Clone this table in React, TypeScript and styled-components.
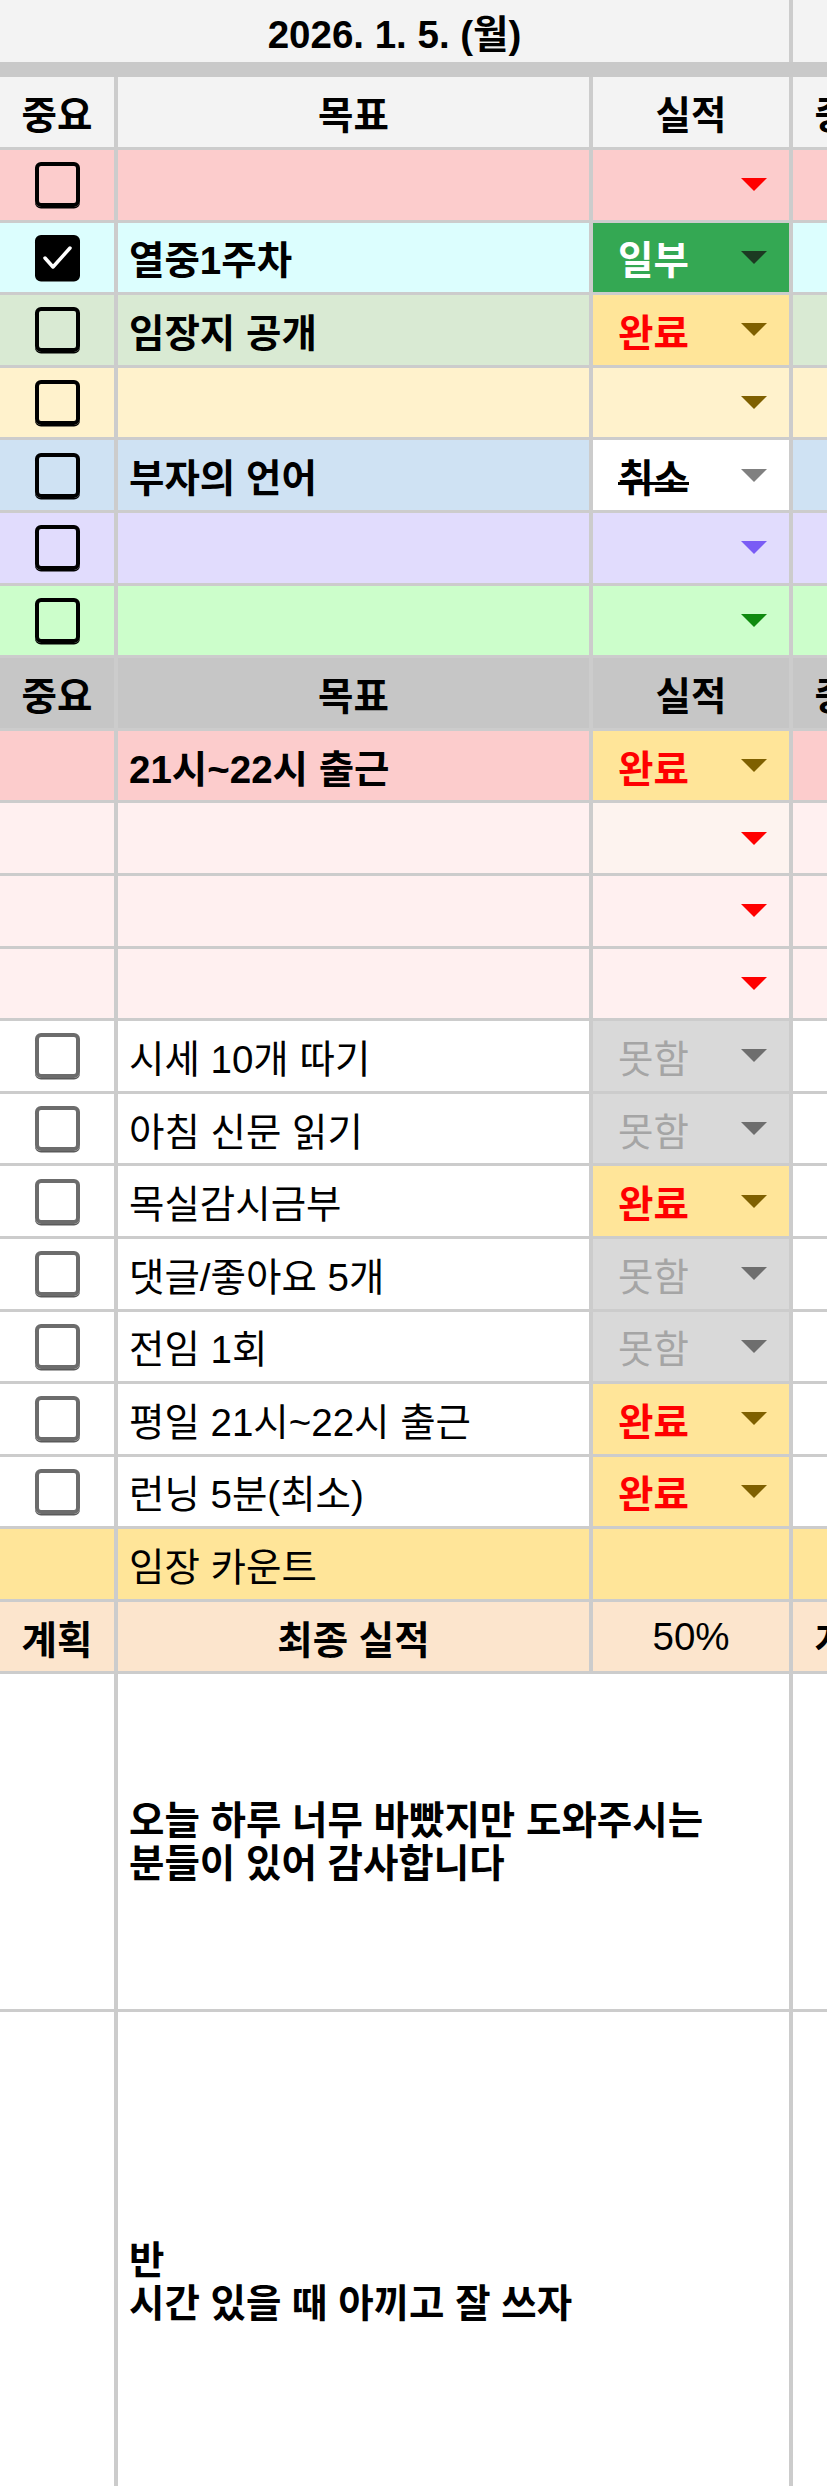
import styled, { createGlobalStyle } from "styled-components";

const GlobalStyle = createGlobalStyle`
  body {
    margin: 0;
    background: #ffffff;
  }
`;

const LINE = "#cccccc";
const COLS = "114px 471px 196px 114px";

const Viewport = styled.div`
  width: 827px;
  height: 2486px;
  overflow: hidden;
  font-family: "Liberation Sans", "Noto Sans CJK KR", sans-serif;
  font-size: 38.5px;
  color: #000;
`;

const Sheet = styled.div`
  width: 907px;
  display: flex;
  flex-direction: column;
  gap: 3px;
  background: ${LINE};
`;

const TopBlock = styled.div`
  display: flex;
  flex-direction: column;
`;

const Band = styled.div`
  height: 15px;
  background: #c9c9c9;
`;

const Row = styled.div<{ $h?: number }>`
  display: grid;
  grid-template-columns: ${COLS};
  column-gap: 4px;
  height: ${({ $h }) => $h ?? 69.6}px;
`;

const Cell = styled.div<{ $bg: string; $center?: boolean; $bold?: boolean; $span?: number }>`
  display: flex;
  align-items: center;
  justify-content: ${({ $center }) => ($center ? "center" : "flex-start")};
  padding: 0 ${({ $center }) => ($center ? "0" : "11px")};
  background: ${({ $bg }) => $bg};
  font-weight: ${({ $bold }) => ($bold ? 700 : 400)};
  white-space: nowrap;
  overflow: hidden;
  ${({ $span }) => ($span ? `grid-column: span ${$span};` : "")}
`;

const Note = styled(Cell)`
  white-space: pre-line;
  line-height: 43px;
`;

const Box = styled.div<{ $tone: "black" | "gray"; $checked?: boolean }>`
  box-sizing: border-box;
  width: 45px;
  height: 45px;
  border-radius: 6px;
  border: 4px solid ${({ $tone }) => ($tone === "black" ? "#000" : "#6c6c6c")};
  box-shadow: 0 1.5px 0 ${({ $tone }) => ($tone === "black" ? "#000" : "#5a5a5a")};
  background: ${({ $checked }) => ($checked ? "#000" : "#fff0")};
  display: flex;
  align-items: center;
  justify-content: center;
`;

const Status = styled.div<{ $bg: string; $color: string; $bold?: boolean }>`
  display: flex;
  align-items: center;
  padding: 0 22px 0 25px;
  background: ${({ $bg }) => $bg};
  color: ${({ $color }) => $color};
  font-weight: ${({ $bold }) => ($bold ? 700 : 400)};
  white-space: nowrap;
`;

const Label = styled.span<{ $strike?: boolean }>`
  position: relative;
  ${({ $strike }) =>
    $strike
      ? `&::after {
          content: "";
          position: absolute;
          left: 0;
          right: 0;
          top: 62%;
          height: 3px;
          background: currentColor;
        }`
      : ""}
`;

const Arrow = styled.span<{ $color: string }>`
  margin-left: auto;
  width: 0;
  height: 0;
  border-left: 13px solid transparent;
  border-right: 13px solid transparent;
  border-top: 13px solid ${({ $color }) => $color};
`;

type Mark = "none" | "black" | "checked" | "gray";

type StatusKind = "일부" | "완료" | "취소" | "못함" | "";

type Item = {
  bg: string;
  mark: Mark;
  goal: string;
  bold?: boolean;
  status: StatusKind;
  arrow?: string;
  statusBg?: string;
};

const CHIPS: Record<Exclude<StatusKind, "">, { bg: string; color: string; arrow: string; bold: boolean; strike?: boolean }> = {
  일부: { bg: "#34a853", color: "#ffffff", arrow: "#1c3a22", bold: true },
  완료: { bg: "#ffe599", color: "#ff0000", arrow: "#7f6000", bold: true },
  취소: { bg: "#ffffff", color: "#000000", arrow: "#808080", bold: true, strike: true },
  못함: { bg: "#d9d9d9", color: "#a5a5a5", arrow: "#6e6e6e", bold: false },
};

const topItems: Item[] = [
  { bg: "#fccccc", mark: "black", goal: "", status: "", arrow: "#ff0000" },
  { bg: "#dcfefe", mark: "checked", goal: "열중1주차", bold: true, status: "일부" },
  { bg: "#d9ead3", mark: "black", goal: "임장지 공개", bold: true, status: "완료" },
  { bg: "#fff2cc", mark: "black", goal: "", status: "", arrow: "#7f6000" },
  { bg: "#cfe2f3", mark: "black", goal: "부자의 언어", bold: true, status: "취소" },
  { bg: "#e1dcfd", mark: "black", goal: "", status: "", arrow: "#7a5cf5" },
  { bg: "#ccfecb", mark: "black", goal: "", status: "", arrow: "#0f8a0f" },
];

const bottomItems: Item[] = [
  { bg: "#fccccc", mark: "none", goal: "21시~22시 출근", bold: true, status: "완료" },
  { bg: "#fff0f0", mark: "none", goal: "", status: "", arrow: "#ff0000", statusBg: "#fdf3ef" },
  { bg: "#fff0f0", mark: "none", goal: "", status: "", arrow: "#ff0000" },
  { bg: "#fff0f0", mark: "none", goal: "", status: "", arrow: "#ff0000" },
  { bg: "#ffffff", mark: "gray", goal: "시세 10개 따기", status: "못함" },
  { bg: "#ffffff", mark: "gray", goal: "아침 신문 읽기", status: "못함" },
  { bg: "#ffffff", mark: "gray", goal: "목실감시금부", status: "완료" },
  { bg: "#ffffff", mark: "gray", goal: "댓글/좋아요 5개", status: "못함" },
  { bg: "#ffffff", mark: "gray", goal: "전임 1회", status: "못함" },
  { bg: "#ffffff", mark: "gray", goal: "평일 21시~22시 출근", status: "완료" },
  { bg: "#ffffff", mark: "gray", goal: "런닝 5분(최소)", status: "완료" },
];

function CheckMark({ mark }: { mark: Mark }) {
  if (mark === "none") return null;
  if (mark === "checked") {
    return (
      <Box $tone="black" $checked>
        <svg width="33" height="33" viewBox="0 0 33 33">
          <polyline points="4,17 12,26 29,7" fill="none" stroke="#fff" strokeWidth="3.5" strokeLinecap="round" strokeLinejoin="round" />
        </svg>
      </Box>
    );
  }
  return <Box $tone={mark === "gray" ? "gray" : "black"} />;
}

function StatusCell({ item }: { item: Item }) {
  if (!item.status) {
    return (
      <Status $bg={item.statusBg ?? item.bg} $color="#000">
        <Arrow $color={item.arrow ?? "#888"} />
      </Status>
    );
  }
  const c = CHIPS[item.status];
  return (
    <Status $bg={c.bg} $color={c.color} $bold={c.bold}>
      <Label $strike={c.strike}>{item.status}</Label>
      <Arrow $color={c.arrow} />
    </Status>
  );
}

function ItemRow({ item }: { item: Item }) {
  return (
    <Row>
      <Cell $bg={item.bg} $center>
        <CheckMark mark={item.mark} />
      </Cell>
      <Cell $bg={item.bg} $bold={item.bold}>
        {item.goal}
      </Cell>
      <StatusCell item={item} />
      <Cell $bg={item.bg} />
    </Row>
  );
}

function HeaderRow({ bg, h }: { bg: string; h?: number }) {
  return (
    <Row $h={h}>
      <Cell $bg={bg} $center $bold>
        중요
      </Cell>
      <Cell $bg={bg} $center $bold>
        목표
      </Cell>
      <Cell $bg={bg} $center $bold>
        실적
      </Cell>
      <Cell $bg={bg} $center $bold>
        중요
      </Cell>
    </Row>
  );
}

export default function App() {
  return (
    <Viewport>
      <GlobalStyle />
      <Sheet>
        <TopBlock>
          <Row $h={62}>
            <Cell $bg="#f3f3f3" $center $bold $span={3}>
              2026. 1. 5. (월)
            </Cell>
            <Cell $bg="#f3f3f3" />
          </Row>
          <Band />
          <HeaderRow bg="#f3f3f3" h={70} />
        </TopBlock>

        {topItems.map((item, i) => (
          <ItemRow key={`t${i}`} item={item} />
        ))}

        <HeaderRow bg="#c6c6c6" />

        {bottomItems.map((item, i) => (
          <ItemRow key={`b${i}`} item={item} />
        ))}

        <Row>
          <Cell $bg="#ffe599" />
          <Cell $bg="#ffe599">임장 카운트</Cell>
          <Cell $bg="#ffe599" />
          <Cell $bg="#ffe599" />
        </Row>

        <Row>
          <Cell $bg="#fce5cd" $center $bold>
            계획
          </Cell>
          <Cell $bg="#fce5cd" $center $bold>
            최종 실적
          </Cell>
          <Cell $bg="#fce5cd" $center>
            50%
          </Cell>
          <Cell $bg="#fce5cd" $center $bold>
            계획
          </Cell>
        </Row>

        <Row $h={335}>
          <Cell $bg="#ffffff" />
          <Note $bg="#ffffff" $bold $span={2}>
            {"오늘 하루 너무 바빴지만 도와주시는\n분들이 있어 감사합니다"}
          </Note>
          <Cell $bg="#ffffff" />
        </Row>

        <Row $h={540}>
          <Cell $bg="#ffffff" />
          <Note $bg="#ffffff" $bold $span={2}>
            {"반\n시간 있을 때 아끼고 잘 쓰자"}
          </Note>
          <Cell $bg="#ffffff" />
        </Row>
      </Sheet>
    </Viewport>
  );
}
